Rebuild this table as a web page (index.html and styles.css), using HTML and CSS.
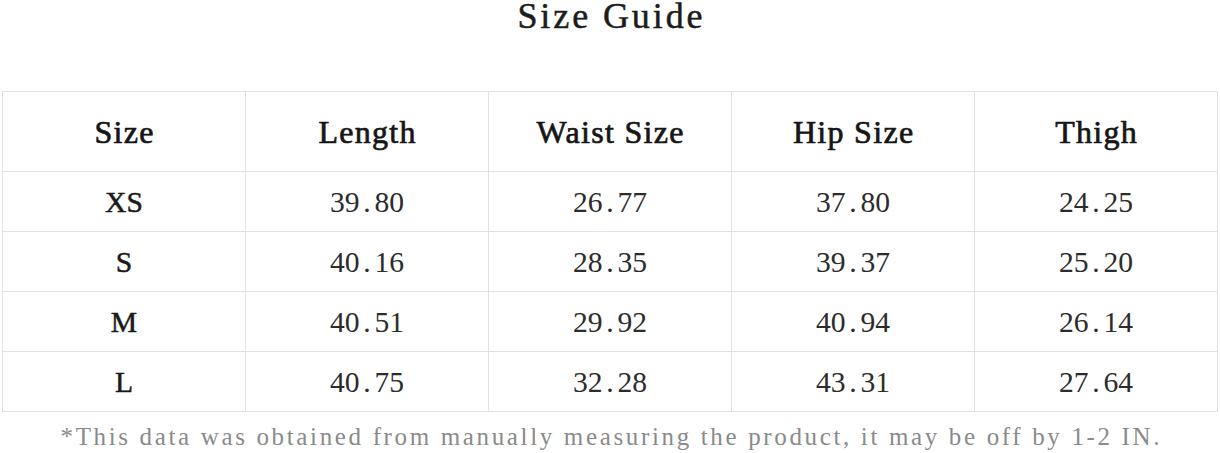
FILE: index.html
```html
<!DOCTYPE html>
<html lang="en">
<head>
<meta charset="utf-8">
<title>Size Guide</title>
<link rel="stylesheet" href="styles.css">
</head>
<body>
<h1 class="title"><span class="title-text">Size Guide</span></h1>
<table class="guide">
  <colgroup>
    <col class="col"><col class="col"><col class="col"><col class="col"><col class="col">
  </colgroup>
  <thead>
    <tr>
      <th><span class="head-text">Size</span></th>
      <th><span class="head-text">Length</span></th>
      <th><span class="head-text">Waist Size</span></th>
      <th><span class="head-text">Hip Size</span></th>
      <th><span class="head-text">Thigh</span></th>
    </tr>
  </thead>
  <tbody>
    <tr>
      <td><span class="size-text">XS</span></td>
      <td><span class="cell-text">39<span class="dot">.</span>80</span></td>
      <td><span class="cell-text">26<span class="dot">.</span>77</span></td>
      <td><span class="cell-text">37<span class="dot">.</span>80</span></td>
      <td><span class="cell-text">24<span class="dot">.</span>25</span></td>
    </tr>
    <tr>
      <td><span class="size-text">S</span></td>
      <td><span class="cell-text">40<span class="dot">.</span>16</span></td>
      <td><span class="cell-text">28<span class="dot">.</span>35</span></td>
      <td><span class="cell-text">39<span class="dot">.</span>37</span></td>
      <td><span class="cell-text">25<span class="dot">.</span>20</span></td>
    </tr>
    <tr>
      <td><span class="size-text">M</span></td>
      <td><span class="cell-text">40<span class="dot">.</span>51</span></td>
      <td><span class="cell-text">29<span class="dot">.</span>92</span></td>
      <td><span class="cell-text">40<span class="dot">.</span>94</span></td>
      <td><span class="cell-text">26<span class="dot">.</span>14</span></td>
    </tr>
    <tr>
      <td><span class="size-text">L</span></td>
      <td><span class="cell-text">40<span class="dot">.</span>75</span></td>
      <td><span class="cell-text">32<span class="dot">.</span>28</span></td>
      <td><span class="cell-text">43<span class="dot">.</span>31</span></td>
      <td><span class="cell-text">27<span class="dot">.</span>64</span></td>
    </tr>
  </tbody>
</table>
<p class="note"><span class="note-text">*This data was obtained from manually measuring the product, it may be off by 1-2 IN.</span></p>
</body>
</html>
```

FILE: styles.css
```css
html, body {
  margin: 0;
  padding: 0;
  background: #ffffff;
}

body {
  width: 1220px;
  font-family: "Liberation Serif", "Times New Roman", serif;
  color: #222222;
}

.title {
  margin: 0;
  height: 91px;
  display: flex;
  justify-content: center;
  align-items: flex-start;
  font-weight: normal;
}

.title-text {
  font-size: 36px;
  line-height: 33px;
  letter-spacing: 2.9px;
  padding-left: 2.9px;
  color: #1c1c1c;
  -webkit-text-stroke: 0.5px #1c1c1c;
}

.guide {
  margin-left: 2px;
  width: 1216px;
  table-layout: fixed;
  border-collapse: separate;
  border-spacing: 0;
  border-top: 1px solid #e2e2e2;
  border-left: 1px solid #e2e2e2;
}

.col {
  width: 243px;
}

.guide th,
.guide td {
  padding: 0;
  text-align: center;
  vertical-align: middle;
  border-right: 1px solid #e2e2e2;
  border-bottom: 1px solid #e2e2e2;
}

.guide th {
  height: 79px;
  font-weight: normal;
}

.guide td {
  height: 59px;
}

.head-text {
  font-size: 32px;
  line-height: 36px;
  letter-spacing: 1.3px;
  padding-left: 1.3px;
  color: #161616;
  -webkit-text-stroke: 0.7px #161616;
}

.cell-text {
  font-size: 29.6px;
  line-height: 34px;
  color: #2c2c2c;
}

.dot {
  display: inline-block;
  width: 0.5em;
  text-align: center;
}

.size-text {
  font-size: 29.6px;
  line-height: 34px;
  color: #1a1a1a;
  -webkit-text-stroke: 0.5px #1a1a1a;
}

.note {
  margin: 0;
  padding-top: 10px;
  text-align: center;
  line-height: 30px;
}

.note-text {
  font-size: 25px;
  letter-spacing: 2.65px;
  padding-left: 2.65px;
  color: #8a8a8a;
}
```
